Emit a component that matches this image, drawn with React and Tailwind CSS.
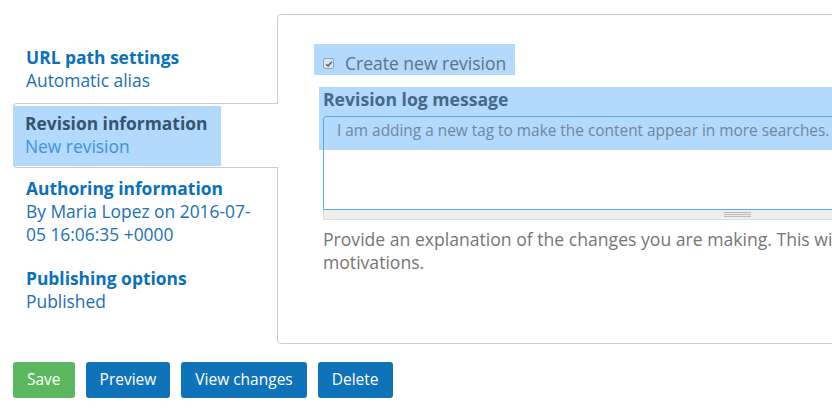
import React from "react";

const tabs = [
  { title: "URL path settings", summary: "Automatic alias", first: true },
  { title: "Revision information", summary: "New revision", active: true },
  { title: "Authoring information", summary: "By Maria Lopez on 2016-07-05 16:06:35 +0000" },
  { title: "Publishing options", summary: "Published" },
];

//VerticalTab component
const VerticalTab = ({ tab }) => {
  if (tab.active) {
    return (
      <li className="relative z-10 -mr-px bg-white border-y border-l border-[#cccccc] rounded-l-[4px] pt-[2px] h-[65px]">
        <div className="bg-[#b3d9fc] w-[208px] h-[60px] pl-[12px] pt-[6px] -ml-px">
          <p className="font-bold text-[#35546f] leading-[23px]">{tab.title}</p>
          <p className="text-[#3e93dc] leading-[23px]">{tab.summary}</p>
        </div>
      </li>
    );
  }
  return (
    <li className={tab.first ? "pl-[13px] pr-[20px] pt-[9px] pb-[11px]" : "pl-[13px] pr-[20px] pt-[9px] pb-[12px]"}>
      <p className="font-bold text-[#0a71b9] leading-[23px]">{tab.title}</p>
      <p className="text-[#1a70b6] leading-[23px]">{tab.summary}</p>
    </li>
  );
};

//App function
const App = () => {
  return (
    <div className="w-[832px] h-[413px] overflow-hidden bg-white font-['Open_Sans',sans-serif] text-[17.4px]">
      <div className="flex items-start pl-[13px] pt-[14px]">
        <ul className="w-[264px] flex-none pt-[23px]">
          {tabs.map((tab) => (
            <VerticalTab key={tab.title} tab={tab} />
          ))}
        </ul>

        <div className="flex-none w-[700px] h-[330px] border border-[#cccccc] rounded-l-[4px] pt-[29px]">
          <div className="ml-[36px] w-[201px] h-[31px] bg-[#b3d9fc] flex items-start pl-[9px] gap-[11px]">
            <span className="mt-[14px] w-[11px] h-[11px] rounded-[2px] border border-[#8ea7bd] bg-[#d6e6f4] flex items-center justify-center">
              <svg width="8" height="8" viewBox="0 0 8 8">
                <path d="M1.2 4.2 L3.1 6 L6.8 1.8" fill="none" stroke="#4a6278" strokeWidth="1.5" />
              </svg>
            </span>
            <span className="mt-[8px] text-[#5b7387] text-[17.5px] leading-[23px] whitespace-nowrap">Create new revision</span>
          </div>

          <div className="mt-[12px] ml-[41px] h-[63px] bg-[#b3d9fc] pl-[4px]">
            <p className="font-bold text-[#46698a] text-[17.6px] leading-[24px]">Revision log message</p>
          </div>

          <div className="ml-[45px] -mt-[34px]">
            <div className="h-[94px] border border-[#5aa7e6] rounded-tl-[3px] px-[13px] pt-[3px]">
              <p className="text-[#6e88a0] text-[15.4px] leading-[22px] whitespace-nowrap">
                I am adding a new tag to make the content appear in more searches.
              </p>
            </div>
            <div className="h-[10px] bg-[#eeeeee] border-x border-b border-[#dddddd] flex flex-col items-start justify-center gap-[1px] pl-[400px]">
              <span className="w-[27px] h-px bg-[#bbbbbb]"></span>
              <span className="w-[27px] h-px bg-[#bbbbbb]"></span>
              <span className="w-[27px] h-px bg-[#bbbbbb]"></span>
            </div>
            <p className="mt-[8px] text-[#767676] text-[17.6px] leading-[23px] w-[900px]">
              Provide an explanation of the changes you are making. This will help other authors understand your motivations.
            </p>
          </div>
        </div>
      </div>

      <div className="flex gap-[11px] pl-[13px] mt-[18px]">
        <button className="h-[36px] px-[14px] rounded-[3px] bg-[#5cb85f] text-white text-[15.5px]">Save</button>
        <button className="h-[36px] px-[14px] rounded-[3px] bg-[#0f73ba] text-white text-[15.5px]">Preview</button>
        <button className="h-[36px] px-[14px] rounded-[3px] bg-[#0f73ba] text-white text-[15.5px]">View changes</button>
        <button className="h-[36px] px-[14px] rounded-[3px] bg-[#0f73ba] text-white text-[15.5px]">Delete</button>
      </div>
    </div>
  );
};

export default App;
